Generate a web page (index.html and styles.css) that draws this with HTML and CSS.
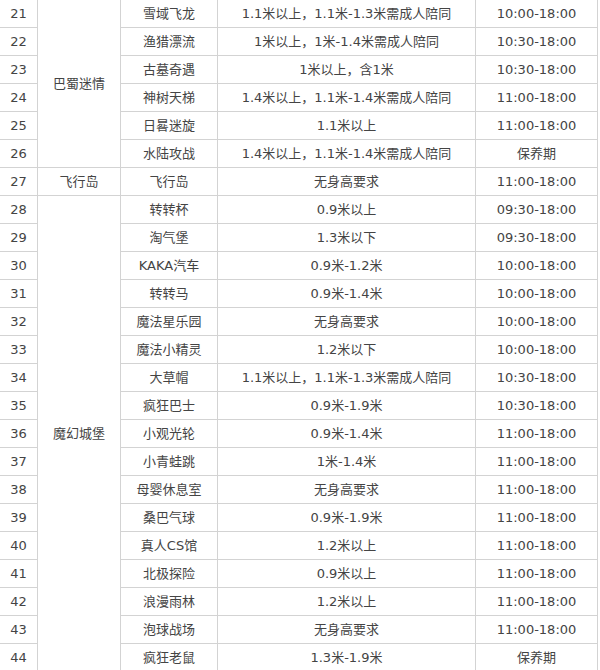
FILE: index.html
```html
<!DOCTYPE html>
<html lang="zh-CN">
<head>
<meta charset="utf-8">
<title>游乐项目</title>
<link rel="stylesheet" href="styles.css">
</head>
<body>
<table class="rides">
  <colgroup>
    <col class="c-no"><col class="c-zone"><col class="c-name"><col class="c-height"><col class="c-time">
  </colgroup>
  <tbody>
    <tr><td>21</td><td class="zone" rowspan="6">巴蜀迷情</td><td>雪域飞龙</td><td>1.1米以上，1.1米-1.3米需成人陪同</td><td>10:00-18:00</td></tr>
    <tr><td>22</td><td>渔猎漂流</td><td>1米以上，1米-1.4米需成人陪同</td><td>10:30-18:00</td></tr>
    <tr><td>23</td><td>古墓奇遇</td><td>1米以上，含1米</td><td>10:30-18:00</td></tr>
    <tr><td>24</td><td>神树天梯</td><td>1.4米以上，1.1米-1.4米需成人陪同</td><td>11:00-18:00</td></tr>
    <tr><td>25</td><td>日晷迷旋</td><td>1.1米以上</td><td>11:00-18:00</td></tr>
    <tr><td>26</td><td>水陆攻战</td><td>1.4米以上，1.1米-1.4米需成人陪同</td><td>保养期</td></tr>
    <tr><td>27</td><td class="zone">飞行岛</td><td>飞行岛</td><td>无身高要求</td><td>11:00-18:00</td></tr>
    <tr><td>28</td><td class="zone" rowspan="17">魔幻城堡</td><td>转转杯</td><td>0.9米以上</td><td>09:30-18:00</td></tr>
    <tr><td>29</td><td>淘气堡</td><td>1.3米以下</td><td>09:30-18:00</td></tr>
    <tr><td>30</td><td>KAKA汽车</td><td>0.9米-1.2米</td><td>10:00-18:00</td></tr>
    <tr><td>31</td><td>转转马</td><td>0.9米-1.4米</td><td>10:00-18:00</td></tr>
    <tr><td>32</td><td>魔法星乐园</td><td>无身高要求</td><td>10:00-18:00</td></tr>
    <tr><td>33</td><td>魔法小精灵</td><td>1.2米以下</td><td>10:00-18:00</td></tr>
    <tr><td>34</td><td>大草帽</td><td>1.1米以上，1.1米-1.3米需成人陪同</td><td>10:30-18:00</td></tr>
    <tr><td>35</td><td>疯狂巴士</td><td>0.9米-1.9米</td><td>10:30-18:00</td></tr>
    <tr><td>36</td><td>小观光轮</td><td>0.9米-1.4米</td><td>11:00-18:00</td></tr>
    <tr><td>37</td><td>小青蛙跳</td><td>1米-1.4米</td><td>11:00-18:00</td></tr>
    <tr><td>38</td><td>母婴休息室</td><td>无身高要求</td><td>11:00-18:00</td></tr>
    <tr><td>39</td><td>桑巴气球</td><td>0.9米-1.9米</td><td>11:00-18:00</td></tr>
    <tr><td>40</td><td>真人CS馆</td><td>1.2米以上</td><td>11:00-18:00</td></tr>
    <tr><td>41</td><td>北极探险</td><td>0.9米以上</td><td>11:00-18:00</td></tr>
    <tr><td>42</td><td>浪漫雨林</td><td>1.2米以上</td><td>11:00-18:00</td></tr>
    <tr><td>43</td><td>泡球战场</td><td>无身高要求</td><td>11:00-18:00</td></tr>
    <tr><td>44</td><td>疯狂老鼠</td><td>1.3米-1.9米</td><td>保养期</td></tr>
  </tbody>
</table>
</body>
</html>
```

FILE: styles.css
```css
html, body {
  margin: 0;
  padding: 0;
  background: #ffffff;
}

.rides {
  border-collapse: separate;
  border-spacing: 0;
  table-layout: fixed;
  width: 598px;
  font-family: "DejaVu Sans", "Noto Sans CJK SC", sans-serif;
  font-size: 13px;
  color: #444444;
}

.c-no { width: 38px; }
.c-zone { width: 83px; }
.c-name { width: 97px; }
.c-height { width: 258px; }
.c-time { width: 122px; }

.rides td {
  box-sizing: border-box;
  height: 28px;
  padding: 0;
  text-align: center;
  vertical-align: middle;
  border-right: 1px solid #d3d3d3;
  border-bottom: 1px solid #d3d3d3;
  white-space: nowrap;
  line-height: 16px;
}
```
